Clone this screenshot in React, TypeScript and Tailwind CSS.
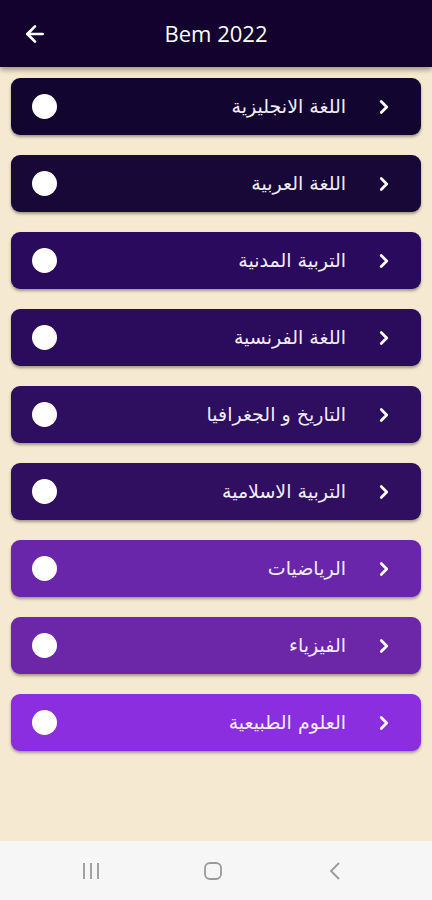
import { ArrowLeft, ChevronRight } from "lucide-react";

type Subject = {
  title: string;
  bg: string;
};

const SUBJECTS: Subject[] = [
  { title: "اللغة الانجليزية", bg: "bg-[#120631]" },
  { title: "اللغة العربية", bg: "bg-[#170838]" },
  { title: "التربية المدنية", bg: "bg-[#2a0a5c]" },
  { title: "اللغة الفرنسية", bg: "bg-[#2b0b5c]" },
  { title: "التاريخ و الجغرافيا", bg: "bg-[#2e0e5e]" },
  { title: "التربية الاسلامية", bg: "bg-[#300f60]" },
  { title: "الرياضيات", bg: "bg-[#6a26aa]" },
  { title: "الفيزياء", bg: "bg-[#6c27a9]" },
  { title: "العلوم الطبيعية", bg: "bg-[#8a2ee0]" },
];

function SubjectCard({ subject }: { subject: Subject }) {
  return (
    <button
      type="button"
      className={`flex h-[57px] w-full items-center justify-between rounded-[9px] pl-[21px] pr-[26px] shadow-[0_2px_3px_rgba(0,0,0,0.35)] ${subject.bg}`}
    >
      <span className="block h-[25px] w-[25px] rounded-full bg-white" />
      <span className="flex items-center gap-[27px]">
        <span
          dir="rtl"
          className="text-[19px] leading-none text-[#f1ecf6]"
          style={{ fontFamily: '"DejaVu Sans", "Noto Sans", sans-serif' }}
        >
          {subject.title}
        </span>
        <ChevronRight className="h-[22px] w-[22px] stroke-[3] text-white" />
      </span>
    </button>
  );
}

export default function App() {
  return (
    <div
      className="flex h-[900px] w-[432px] flex-col overflow-hidden bg-[#f5e9d1]"
      style={{ fontFamily: '"Open Sans", "DejaVu Sans", sans-serif' }}
    >
      <header className="relative z-10 flex h-[67px] shrink-0 items-center bg-[#13022d] px-[22px] shadow-[0_3px_5px_rgba(0,0,0,0.35)]">
        <ArrowLeft className="h-[26px] w-[26px] stroke-[2.5] text-white" />
        <h1 className="flex-1 pr-[26px] text-center text-[22px] font-normal text-white">Bem 2022</h1>
      </header>

      <main className="flex flex-1 flex-col gap-[20px] px-[11px] pt-[11px]">
        {SUBJECTS.map((subject) => (
          <SubjectCard key={subject.title} subject={subject} />
        ))}
      </main>

      <nav className="flex h-[59px] shrink-0 items-center justify-center gap-[102px] bg-[#f6f6f6] pr-[6px]">
        <svg width="20" height="18" viewBox="0 0 20 18" className="text-[#9a9a9a]">
          <path d="M3 1v16M10 1v16M17 1v16" stroke="currentColor" strokeWidth="1.8" fill="none" />
        </svg>
        <svg width="20" height="20" viewBox="0 0 20 20" className="text-[#9a9a9a]">
          <rect x="2" y="2" width="16" height="16" rx="5" stroke="currentColor" strokeWidth="1.8" fill="none" />
        </svg>
        <svg width="20" height="20" viewBox="0 0 20 20" className="text-[#9a9a9a]">
          <path d="M14 2L6 10l8 8" stroke="currentColor" strokeWidth="1.8" fill="none" />
        </svg>
      </nav>
    </div>
  );
}
